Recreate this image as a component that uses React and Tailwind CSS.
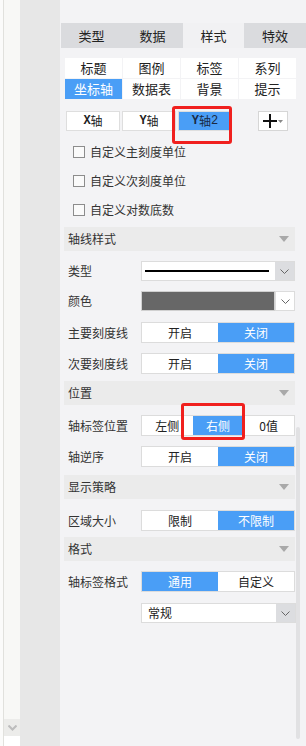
import React from "react";

const BLUE = "bg-[#4a9ef6] text-white";

const Chevron = ({ className = "" }) => (
  <svg width="9" height="5" viewBox="0 0 9 5" className={className}>
    <path d="M0.5 0.5 L4.5 4.5 L8.5 0.5" fill="none" stroke="#666" strokeWidth="1" />
  </svg>
);

const Section = ({ title, className = "" }) => (
  <div className={`ml-[4px] w-[231px] h-[24px] bg-[#ebebeb] flex items-center justify-between pl-[4px] pr-[6px] ${className}`}>
    <span className="text-[12px] text-[#333]">{title}</span>
    <svg width="10" height="6" viewBox="0 0 10 6">
      <path d="M0 0 L10 0 L5 6 Z" fill="#a9a9a9" />
    </svg>
  </div>
);

const Row = ({ label, children, className = "" }) => (
  <div className={`flex items-center ${className}`}>
    <span className="w-[81px] pl-[8px] text-[12px] text-[#333] whitespace-nowrap">{label}</span>
    {children}
  </div>
);

const Toggle = ({ items, active }) => (
  <div className="w-[154px] h-[21px] flex border border-[#dcdcdc] bg-white text-[12px]">
    {items.map((t, i) => (
      <div
        key={t}
        className={`flex-1 flex items-center justify-center ${i === active ? BLUE : "text-[#222]"}`}
      >
        {t}
      </div>
    ))}
  </div>
);

const Check = ({ label }) => (
  <div className="h-[29px] flex items-center pl-[13px] gap-[5px]">
    <div className="w-[12px] h-[12px] border border-[#8c8c8c] bg-[#fafafa]" />
    <span className="text-[12px] text-[#333]">{label}</span>
  </div>
);

export default function App() {
  const tabs = ["类型", "数据", "样式", "特效"];
  const subs = ["标题", "图例", "标签", "系列", "坐标轴", "数据表", "背景", "提示"];
  return (
    <div className="flex w-[306px] h-[746px] overflow-hidden font-['Noto_Sans_CJK_SC',sans-serif]">
      <div className="w-[4px] bg-[#fbfbfa] border-r border-[#e1e1dd]" />
      <div className="w-[16px] flex flex-col bg-[#f8f8f6]">
        <div className="flex-1" />
        <div className="h-[17px] bg-[#ececea] flex items-center justify-center">
          <svg width="9" height="6" viewBox="0 0 9 6">
            <path d="M0.5 0.5 L4.5 4.5 L8.5 0.5" fill="none" stroke="#bdbdbd" strokeWidth="2" />
          </svg>
        </div>
        <div className="h-[10px] bg-white" />
      </div>
      <div className="w-[40px] bg-[#e7e7e7]" />
      <div className="flex-1 bg-[#f3f3f5] relative">
        {/* tabs */}
        <div className="mt-[23px] ml-[1px] flex h-[25px] text-[13px] text-[#222]">
          {tabs.map((t, i) => (
            <div
              key={t}
              className={`${i === 3 ? "w-[62px]" : "w-[61px]"} flex items-center justify-center ${i === 2 ? "bg-[#f1f1f3]" : "bg-[#dadbde]"}`}
            >
              {t}
            </div>
          ))}
        </div>

        {/* sub tabs */}
        <div className="mt-[10px] ml-[5px] grid grid-cols-[57px_57px_57px_57px] gap-x-[1px] gap-y-[1px] text-[13px] text-[#222]">
          {subs.map((t, i) => (
            <div
              key={t}
              className={`h-[20px] flex items-center justify-center ${i === 4 ? BLUE : "bg-white"}`}
            >
              {t}
            </div>
          ))}
        </div>

        {/* axis buttons */}
        <div className="mt-[12px] ml-[6px] flex items-center gap-[2px] text-[12px] text-[#222]">
          <div className="w-[54px] h-[20px] bg-white border border-[#dedede] flex items-center justify-center">
            <span className="font-['Liberation_Mono'] font-bold">X</span>轴
          </div>
          <div className="w-[54px] h-[20px] bg-white border border-[#dedede] flex items-center justify-center">
            <span className="font-['Liberation_Mono'] font-bold">Y</span>轴
          </div>
          <div className="w-[54px] h-[20px] bg-[#4a9ef6] border border-[#dedede] flex items-center justify-center text-[#1a2a44]">
            <span className="font-['Liberation_Mono'] font-bold">Y</span>轴<span className="font-['Liberation_Mono']">2</span>
          </div>
          <div className="ml-[24px] w-[30px] h-[20px] bg-white border border-[#d6d6d6] flex items-center justify-center gap-[1px]">
            <svg width="14" height="14" viewBox="0 0 14 14">
              <path d="M0 7 H14 M7 0 V14" stroke="#111" strokeWidth="2" />
            </svg>
            <svg width="5" height="3" viewBox="0 0 5 3">
              <path d="M0 0 H5 L2.5 3 Z" fill="#888" />
            </svg>
          </div>
        </div>

        {/* checkboxes */}
        <div className="mt-[6px]">
          <Check label="自定义主刻度单位" />
          <Check label="自定义次刻度单位" />
          <Check label="自定义对数底数" />
        </div>

        <Section title="轴线样式" className="mt-[3px]" />
        <Row label="类型" className="mt-[10px]">
          <div className="w-[154px] h-[20px] flex border border-[#dcdcdc] bg-white">
            <div className="flex-1 flex items-center pl-[3px] pr-[6px]">
              <div className="w-full h-[1.5px] bg-black" />
            </div>
            <div className="w-[19px] bg-[#dcdde0] flex items-center justify-center">
              <Chevron />
            </div>
          </div>
        </Row>
        <Row label="颜色" className="mt-[10px]">
          <div className="w-[154px] h-[20px] flex">
            <div className="flex-1 bg-[#676767] border border-[#d0d0d0]" />
            <div className="w-[20px] bg-white border border-[#dcdcdc] flex items-center justify-center">
              <Chevron />
            </div>
          </div>
        </Row>
        <Row label="主要刻度线" className="mt-[11px]">
          <Toggle items={["开启", "关闭"]} active={1} />
        </Row>
        <Row label="次要刻度线" className="mt-[10px]">
          <Toggle items={["开启", "关闭"]} active={1} />
        </Row>

        <Section title="位置" className="mt-[7px]" />
        <Row label="轴标签位置" className="mt-[10px]">
          <Toggle items={["左侧", "右侧", "0值"]} active={1} />
        </Row>
        <Row label="轴逆序" className="mt-[10px]">
          <Toggle items={["开启", "关闭"]} active={1} />
        </Row>

        <Section title="显示策略" className="mt-[8px]" />
        <Row label="区域大小" className="mt-[11px]">
          <Toggle items={["限制", "不限制"]} active={1} />
        </Row>

        <Section title="格式" className="mt-[6px]" />
        <Row label="轴标签格式" className="mt-[10px]">
          <Toggle items={["通用", "自定义"]} active={0} />
        </Row>
        <Row label="" className="mt-[11px]">
          <div className="w-[155px] h-[20px] flex border border-[#dcdcdc] bg-white">
            <div className="flex-1 flex items-center pl-[6px] text-[12px] text-[#222]">常规</div>
            <div className="w-[19px] bg-[#dcdde0] flex items-center justify-center">
              <Chevron />
            </div>
          </div>
        </Row>

        {/* scrollbar */}
        <div className="absolute left-[236px] top-[427px] w-[4px] h-[312px] rounded-full bg-[#e1e1e3]" />

        {/* red highlight marks */}
        <div className="absolute left-[112px] top-[106px] w-[60px] h-[38px] border-[3px] border-[#f0201e] rounded-[3px]" />
        <div className="absolute left-[121px] top-[403px] w-[64px] h-[37px] border-[3px] border-[#f0201e] rounded-[3px]" />
      </div>
    </div>
  );
}
